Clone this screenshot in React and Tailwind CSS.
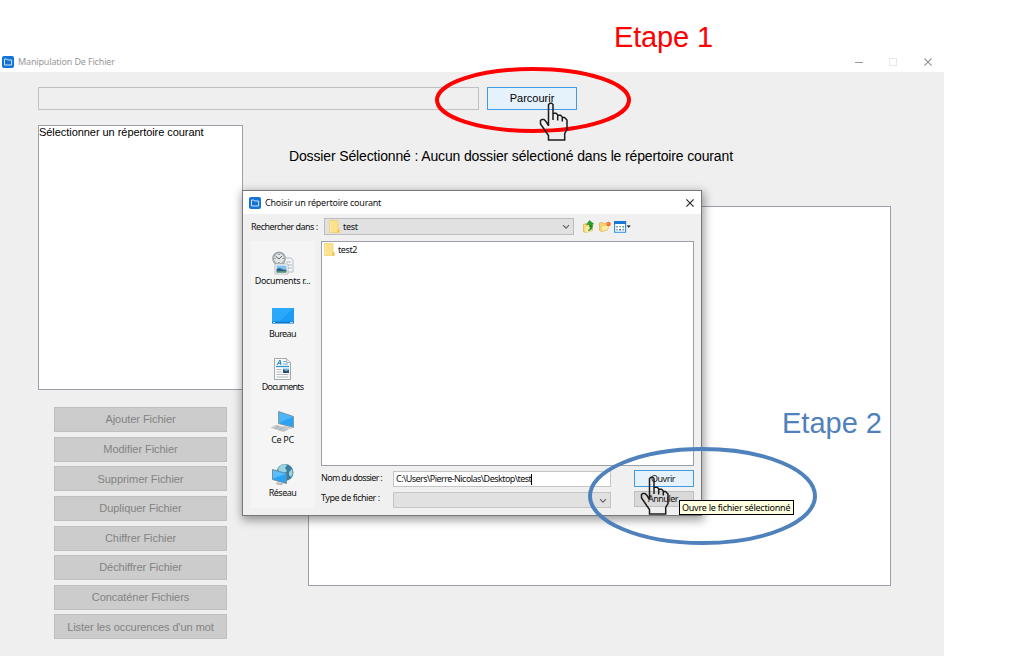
import React from "react";

function Txt({ className = "", children }) {
  return <span className={"whitespace-nowrap " + className}>{children}</span>;
}

function AppIcon() {
  return (
    <svg width="12" height="12" viewBox="0 0 12 12" className="shrink-0">
      <rect width="12" height="12" rx="2" fill="#1373d6" />
      <path d="M2.5 3h2.3l.8 1h4v5h-7.100z" fill="none" stroke="#cfe6fb" strokeWidth="1" />
    </svg>
  );
}

function Folder({ className = "" }) {
  return (
    <svg width="11" height="13" viewBox="0 0 11 13" className={"shrink-0 " + className}>
      <path d="M0.5 0.5h8.500v8l1.300 1v3h-9.800z" fill="#fce28c" stroke="#f0cf6c" strokeWidth="0.7" />
      <path d="M8 9.500h2.300v3h-2.300z" fill="#f0c653" />
      <path d="M1.500 1v11" stroke="#fdeaa8" />
    </svg>
  );
}

function Chevron({ className = "" }) {
  return (
    <svg width="8" height="6" viewBox="0 0 8 6" className={className}>
      <path d="M1 1.200l3 3 3-3" fill="none" stroke="#606060" strokeWidth="1.100" />
    </svg>
  );
}

function Close({ color }) {
  return (
    <svg width="8" height="8" viewBox="0 0 8 8">
      <path d="M0.400 0.400l7.200 7.200M7.600 0.400l-7.200 7.200" stroke={color} strokeWidth="1.100" />
    </svg>
  );
}

function RecentIcon() {
  return (
    <svg width="24" height="24" viewBox="0 0 24 24">
      <path d="M13 7h7l2 2v12h-9z" fill="#f5f6f7" stroke="#a9adb2" strokeWidth="0.8" />
      <path d="M15 11h5M15 14h6M15 17h6" stroke="#a8b9cb" />
      <circle cx="8" cy="7.500" r="6" fill="#e2e5e6" stroke="#a3a8ac" strokeWidth="1.800" />
      <path d="M4.500 5l3.500 3 3-3M8 3v1M8 11v1M3.500 7.500h1M11.500 7.500h1" fill="none" stroke="#555" strokeWidth="0.9" />
      <path d="M4 13h13v10H4z" fill="#fff" stroke="#a9adb2" strokeWidth="0.8" />
      <path d="M5.500 14.500h10v4h-10z" fill="#7cc2ef" />
      <path d="M5.500 18l3-1 4 1.500h3v3h-10z" fill="#305f88" />
      <path d="M5.500 20.200h10v1.300h-10z" fill="#57a36d" />
    </svg>
  );
}

function DesktopIcon() {
  return (
    <svg width="24" height="24" viewBox="0 0 24 24">
      <path d="M1 4h22v15.500H1z" fill="#1b9bf3" />
      <path d="M1 4h22L8 17.500H1z" fill="#2aa8fa" />
      <path d="M1 18.500h22" stroke="#1377bd" strokeWidth="1.500" />
      <path d="M2 18.500h2M19 18.500h3" stroke="#a5d9fb" />
    </svg>
  );
}

function DocumentIcon() {
  return (
    <svg width="24" height="24" viewBox="0 0 24 24">
      <path d="M3.500 1.500h12l4 4v17h-16z" fill="#fcfcfc" stroke="#a3a8ab" />
      <path d="M15.500 1.500v4h4" fill="#e3e7e9" stroke="#a3a8ab" strokeWidth="0.8" />
      <path d="M6 8l3-5 1 5M7 6.300h3" fill="none" stroke="#1582c8" />
      <path d="M12 4.500h3M12 7h5" stroke="#66a9d5" />
      <path d="M5 9.500h13" stroke="#2c93cf" strokeWidth="1.300" />
      <path d="M5.500 12.500h5M5.500 15h5M5.500 17.500h12M5.500 20h12" stroke="#a8b0b5" strokeWidth="0.9" />
      <path d="M12 11.500h6v4.500h-6z" fill="#79b9df" />
      <path d="M12 12l3 2 3-1v3h-6z" fill="#28516f" />
    </svg>
  );
}

function ComputerIcon() {
  return (
    <svg width="24" height="24" viewBox="0 0 24 24">
      <path d="M7.500 1.500l15 5v11l-15-4z" fill="#28a2f3" stroke="#8a9196" strokeWidth="0.9" />
      <path d="M8 2.200l14 4.700L8 12.700z" fill="#4bb7f8" />
      <path d="M14 15.500l-2 1.500 8 2 2-1" fill="#c5cacd" />
      <path d="M0.500 17.500l5-2.200 12 3.700-5 2.500z" fill="#d3d8db" stroke="#a9b0b4" strokeWidth="0.600" />
      <path d="M3 17.600l10 3M5 16.600l10 3M4 19l4-3M8 20l4-3" stroke="#92999e" strokeWidth="0.500" />
    </svg>
  );
}

function NetworkIcon() {
  return (
    <svg width="24" height="24" viewBox="0 0 24 24">
      <circle cx="14" cy="9.500" r="8.500" fill="#3c7e9d" />
      <path d="M9 3c2-2 6-2 7-1l-2 3 2 3-4 3-4-2-1-3zM18 9l3-3c1 3 1 6-1 8l-2-2z" fill="#9bd4df" />
      <path d="M1.500 6.500l14 4v10l-14-4z" fill="#29a3f2" stroke="#76868e" strokeWidth="0.900" />
      <path d="M2 7.200l13 3.700L2 15.500z" fill="#58bdf9" />
      <path d="M6.500 19l6 1.500-2 2-6-1.500z" fill="#b8bfc3" />
    </svg>
  );
}

function UpIcon() {
  return (
    <svg width="12" height="13" viewBox="0 0 12 13">
      <path d="M0.500 4.500l3-1 1 1 5-1v7l-7 2-2-1z" fill="#f9d978" stroke="#dbab3e" strokeWidth="0.700" />
      <path d="M2.500 7l8-1.500-2 5.500-6 1.500z" fill="#fdeca5" />
      <path d="M5 10.500c2-1 2.500-2 2.300-5H9.500c.2 3-1.500 5-4.500 5zM3.500 4.500L6.500 0.500l4.200 3.500-2 .2v2.500L6.500 7V4.500z" fill="#28a32b" stroke="#147a1d" strokeWidth="0.500" />
    </svg>
  );
}

function NewFolderIcon() {
  return (
    <svg width="12" height="12" viewBox="0 0 12 12">
      <path d="M0.500 2l3-.5 1 1 4-.5v7l-6 1.500-2-1z" fill="#f7d267" stroke="#e0b14a" strokeWidth="0.700" />
      <path d="M2.500 5l8-1-2 5-6 1.500z" fill="#fdeca5" stroke="#e8bf5e" strokeWidth="0.500" />
      <circle cx="9.500" cy="3" r="2.200" fill="#f36a2c" />
      <circle cx="9" cy="2.700" r="0.800" fill="#fba36b" />
    </svg>
  );
}

function ViewIcon() {
  return (
    <svg width="17" height="12" viewBox="0 0 17 12">
      <path d="M0.600 0.600h11v10.600h-11z" fill="#fff" stroke="#3389dc" strokeWidth="1.100" />
      <path d="M0 0h12v3H0z" fill="#1b77d5" />
      <path d="M2.200 5h1.600v1.600H2.200zM8.500 8h1.600v1.600H8.500z" fill="#6e8fb8" />
      <path d="M5.300 5h1.600v1.600H5.300zM2.200 8h1.600v1.600H2.200z" fill="#75a8a5" />
      <path d="M8.500 5h1.600v1.600H8.500z" fill="#62a34e" />
      <path d="M5.300 8h1.600v1.600H5.300z" fill="#254f9f" />
      <path d="M12.700 4.500h4l-2 2.300z" fill="#111" />
    </svg>
  );
}

function Hand({ className }) {
  return (
    <svg width="30" height="40" viewBox="0 0 30 40" className={"absolute " + className}>
      <path
        d="M9.500 24V2.500L11 1.300H12.700L14 2.500V18M14 11.200H17L18.700 12.800V18.500M18.700 13.300H21.500L23.300 15V19.500M23.300 15.500H25.500L28 18V27.500L25.700 31.500V38H9.500V33.500L7 30L4 25.500L1.500 22V18.500L3 17.500H5L7 19.500L9.500 23.500"
        fill="none"
        stroke="#1c1c1c"
        strokeWidth="1.500"
      />
    </svg>
  );
}

const actions = [
  "Ajouter Fichier",
  "Modifier Fichier",
  "Supprimer Fichier",
  "Dupliquer Fichier",
  "Chiffrer Fichier",
  "Déchiffrer Fichier",
  "Concaténer Fichiers",
  "Lister les occurences d'un mot",
];

const places = [
  ["Documents r...", RecentIcon, "tracking-[-0.34px]"],
  ["Bureau", DesktopIcon, "tracking-[-0.6px]"],
  ["Documents", DocumentIcon, "tracking-[-0.8px]"],
  ["Ce PC", ComputerIcon, "tracking-[-0.3px]"],
  ["Réseau", NetworkIcon, "tracking-[-0.5px]"],
];

function Dialog() {
  return (
    <div className="absolute left-[242px] top-[190px] flex h-[326px] w-[460px] flex-col border border-[#777] bg-[#f0f0f0] font-['Noto_Sans',sans-serif] text-[9px] leading-[12px] tracking-[-0.3px] text-[#111] shadow-[1px_3px_9px_1px_rgba(0,0,0,0.4)]">
      <div className="flex h-[23px] items-center bg-white pl-[6px] pr-[7px]">
        <AppIcon />
        <Txt className="ml-[4px] flex-1 tracking-[-0.23px]">Choisir un répertoire courant</Txt>
        <Close color="#222" />
      </div>
      <div className="mt-[4px] flex h-[17px] items-center pl-2">
        <Txt className="w-[73px] tracking-[-0.52px]">Rechercher dans :</Txt>
        <div className="flex h-[17px] w-[250px] items-center border border-[#bcbcbc] bg-[#e1e1e1] pl-1 pr-[3px]">
          <Folder />
          <Txt className="ml-[3px] flex-1">test</Txt>
          <Chevron />
        </div>
        <div className="ml-[9px] flex items-center gap-[3.500px]">
          <UpIcon />
          <NewFolderIcon />
          <ViewIcon />
        </div>
      </div>
      <div className="mt-[6px] flex pl-2">
        <div className="flex h-[267px] w-[64px] flex-col overflow-hidden bg-[#f5f5f5] pt-[10px]">
          {places.map(([name, Icon, spacing]) => (
            <div key={name} className="flex h-[53.100px] shrink-0 flex-col items-center pr-px">
              <Icon />
              <Txt className={spacing}>{name}</Txt>
            </div>
          ))}
        </div>
        <div className="ml-[6px] flex w-[373px] flex-col">
          <div className="flex h-[225px] border border-[#9a9fa8] bg-white pl-[2px] pt-[1px]">
            <Folder />
            <Txt className="ml-[3px] mt-[1px] tracking-[-0.4px]">test2</Txt>
          </div>
          <div className="mt-[4px] flex">
            <div className="flex w-[72px] flex-col">
              <Txt className="mt-[2px] h-[12px] tracking-[-0.68px]">Nom du dossier :</Txt>
              <Txt className="mt-[8px] h-[12px] tracking-[-0.46px]">Type de fichier :</Txt>
            </div>
            <div className="flex w-[218px] flex-col gap-[5px] pt-[1px]">
              <div className="flex h-[16px] items-center border border-[#c4c4c4] bg-white pl-[2px]">
                <Txt className="tracking-[-0.55px]">C:\Users\Pierre-Nicolas\Desktop\test</Txt>
                <div className="h-[11px] w-px bg-black" />
              </div>
              <div className="flex h-[16px] items-center justify-end border border-[#c4c4c4] bg-[#e1e1e1] pr-[3px]">
                <Chevron className="mt-[2px]" />
              </div>
            </div>
            <div className="ml-[23px] flex w-[60px] flex-col gap-[4px]">
              <div className="flex h-[17px] items-center justify-center border border-[#3f9be5] bg-[#e5f1fb]">
                <Txt className="-ml-[2px] tracking-[-0.5px]">Ouvrir</Txt>
              </div>
              <div className="flex h-[16px] items-center justify-center border border-[#c0c0c0] bg-[#d9d9d9]">
                <Txt className="-ml-[2px] tracking-[-0.5px]">Annuler</Txt>
              </div>
            </div>
          </div>
        </div>
      </div>
    </div>
  );
}

export default function App() {
  return (
    <div className="relative h-[656px] w-[1009px] overflow-hidden bg-white font-['Liberation_Sans',sans-serif] text-black">
      <div className="flex h-full w-[944px] flex-col pt-[52px]">
        <div className="flex h-[20px] shrink-0 items-center pl-[2px] font-['Noto_Sans',sans-serif] text-[9px] tracking-[-0.16px] text-[#999]">
          <AppIcon />
          <Txt className="ml-1 flex-1">Manipulation De Fichier</Txt>
          <div className="mr-[12px] flex items-center gap-[26px]">
            <div className="-ml-px mr-px h-px w-2 bg-[#999]" />
            <div className="-ml-px mr-px h-2 w-2 border border-[#e8e8e8]" />
            <Close color="#909090" />
          </div>
        </div>
        <div className="flex flex-1 flex-col bg-[#efefef] pl-[38px] pt-[15px]">
          <div className="flex h-[23px]">
            <div className="w-[441px] border border-[#bfc1c5]" />
            <div className="ml-[8px] flex h-[23px] w-[90px] items-center justify-center border border-[#3f9be5] bg-[#e5f1fb] text-[11px]">
              <Txt>Parcourir</Txt>
            </div>
          </div>
          <div className="flex pt-[15px]">
            <div className="w-[205px]">
              <div className="h-[265px] border border-[#9a9fa8] bg-white text-[11px] leading-[13px]">
                <Txt className="tracking-[-0.05px]">Sélectionner un répertoire courant</Txt>
              </div>
              <div className="ml-4 mt-[17px] flex w-[173px] flex-col gap-[4.650px]">
                {actions.map((label) => (
                  <div key={label} className="flex h-[25px] items-center justify-center border border-[#bfbfbf] bg-[#ccc] text-[11px] text-[#838383]">
                    <Txt className="tracking-[-0.05px]">{label}</Txt>
                  </div>
                ))}
              </div>
            </div>
            <div className="ml-[46px] mt-[21px] flex flex-1 flex-col">
              <Txt className="text-[14px] leading-[20px] tracking-[-0.145px]">Dossier Sélectionné : Aucun dossier sélectioné dans le répertoire courant</Txt>
              <div className="ml-[19px] mt-[40px] h-[380px] w-[583px] border border-[#9a9fa8] bg-white" />
            </div>
          </div>
        </div>
      </div>
      <Dialog />
      <svg width="1009" height="656" viewBox="0 0 1009 656" className="absolute left-0 top-0">
        <ellipse cx="533" cy="100" rx="96" ry="31" fill="none" stroke="#f00" strokeWidth="4" />
        <ellipse cx="702.500" cy="496" rx="112.500" ry="47" fill="none" stroke="#4f81bd" strokeWidth="4" />
      </svg>
      <Hand className="left-[539px] top-[102px]" />
      <Hand className="left-[640px] top-[476px]" />
      <div className="absolute left-[679px] top-[500px] flex h-[15px] w-[115px] items-center border border-black bg-[#ffffe1] pl-[2px] font-['Noto_Sans',sans-serif] text-[9px] tracking-[-0.24px]">
        <Txt>Ouvre le fichier sélectionné</Txt>
      </div>
      <Txt className="absolute left-[614px] top-[20px] text-[29px] leading-[34px] tracking-[-0.15px] text-[#f00]">Etape 1</Txt>
      <Txt className="absolute left-[782px] top-[406px] text-[29px] leading-[34px] text-[#4f81bd]">Etape 2</Txt>
    </div>
  );
}
